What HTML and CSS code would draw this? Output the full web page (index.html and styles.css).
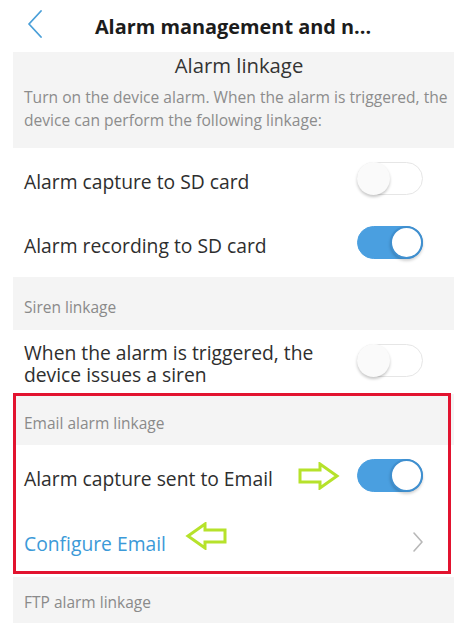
FILE: index.html
```html
<!DOCTYPE html>
<html lang="en">
<head>
<meta charset="utf-8">
<title>Alarm management</title>
<link rel="stylesheet" href="styles.css">
</head>
<body>
<header class="topbar">
  <svg class="back" viewBox="0 0 16 28" width="16" height="28" aria-hidden="true">
    <polyline points="14,1 2,14 14,27" fill="none" stroke="#4a9fd8" stroke-width="1.8" stroke-linecap="round" stroke-linejoin="round"/>
  </svg>
  <h1 class="title">Alarm management and n...</h1>
</header>
<main class="list">
  <section class="intro">
    <h2 class="intro-title">Alarm linkage</h2>
    <p class="intro-text">Turn on the device alarm. When the alarm is triggered, the device can perform the following linkage:</p>
  </section>
  <div class="row">
    <span class="label">Alarm capture to SD card</span>
    <span class="toggle"><span class="knob"></span></span>
  </div>
  <div class="row row-b">
    <span class="label">Alarm recording to SD card</span>
    <span class="toggle on"><span class="knob"></span></span>
  </div>
  <div class="group-head">Siren linkage</div>
  <div class="row row-tall">
    <span class="label">When the alarm is triggered, the device issues a siren</span>
    <span class="toggle"><span class="knob"></span></span>
  </div>
  <div class="highlight">
    <div class="group-head">Email alarm linkage</div>
    <div class="row row-b">
      <span class="label">Alarm capture sent to Email</span>
      <span class="row-end">
        <svg class="arrow" viewBox="0 0 42 28" width="42" height="28" aria-hidden="true">
          <polygon points="2,8 22,8 22,2 39,14 22,26 22,20 2,20" fill="none" stroke="#b6e22b" stroke-width="3" stroke-linejoin="miter"/>
        </svg>
        <span class="toggle on"><span class="knob"></span></span>
      </span>
    </div>
    <div class="row">
      <span class="label link">Configure Email</span>
      <svg class="arrow arrow-left" viewBox="0 0 42 28" width="42" height="28" aria-hidden="true">
        <polygon points="40,8 20,8 20,2 3,14 20,26 20,20 40,20" fill="none" stroke="#b6e22b" stroke-width="3" stroke-linejoin="miter"/>
      </svg>
      <svg class="chev" viewBox="0 0 12 22" width="12" height="22" aria-hidden="true">
        <polyline points="2,2 10,11 2,20" fill="none" stroke="#b8b8b8" stroke-width="1.6" stroke-linecap="round" stroke-linejoin="round"/>
      </svg>
    </div>
  </div>
  <div class="group-head ftp">FTP alarm linkage</div>
</main>
</body>
</html>
```

FILE: styles.css
```css
html, body {
  margin: 0;
  padding: 0;
  background: #ffffff;
}
body {
  font-family: "Open Sans", "Noto Sans", sans-serif;
  color: #2a2a2a;
  width: 466px;
  height: 634px;
  overflow: hidden;
}
.topbar {
  height: 52px;
  display: flex;
  align-items: center;
  justify-content: center;
  position: relative;
}
.back {
  position: absolute;
  left: 27px;
  top: 10px;
}
.title {
  margin: 0;
  font-size: 19.9px;
  font-weight: 700;
  color: #1c1c1c;
}
.list {
  margin: 0 12px 0 13px;
}
.intro {
  background: #f4f4f4;
  height: 96px;
  box-sizing: border-box;
  padding: 0 0 0 11px;
}
.intro-title {
  margin: 0;
  font-size: 20.3px;
  font-weight: 400;
  line-height: 27px;
  text-align: center;
  color: #333;
}
.intro-text {
  margin: 7px 0 0;
  font-size: 15.6px;
  line-height: 23px;
  color: #8c8c8c;
}
.row {
  height: 64px;
  display: flex;
  align-items: center;
  justify-content: space-between;
  padding: 0 31px 0 11px;
  position: relative;
}
.row-b {
  height: 65px;
}
.row-tall .label {
  width: 310px;
  line-height: 22px;
  margin-top: 3px;
}
.label {
  font-size: 19.3px;
  color: #2e2e2e;
  margin-top: 2px;
}
.link {
  color: #3c9ad8;
}
.group-head {
  background: #f4f4f4;
  height: 53px;
  box-sizing: border-box;
  padding: 20px 0 0 11px;
  font-size: 15.5px;
  line-height: 20px;
  color: #8a8a8a;
}
.highlight {
  position: relative;
}
.highlight .group-head {
  height: 51px;
  padding-top: 19px;
}
.highlight::after {
  content: "";
  position: absolute;
  left: 0;
  top: -1px;
  right: 3px;
  bottom: 0;
  border: 3px solid #e2132f;
  pointer-events: none;
}
.ftp {
  margin-top: 3px;
  height: 46px;
  padding-top: 15px;
}
.row-end {
  display: flex;
  align-items: center;
  gap: 17px;
}
.arrow {
  display: block;
  margin-top: -4px;
}
.arrow-left {
  position: absolute;
  left: 172px;
  top: 16px;
}
.chev {
  margin-right: -1px;
}
.toggle {
  width: 66px;
  height: 33px;
  border-radius: 17px;
  box-sizing: border-box;
  border: 1px solid #e6e6e6;
  background: #ffffff;
  position: relative;
  flex: none;
  margin-top: -4px;
}
.knob {
  position: absolute;
  top: -1px;
  left: -1px;
  width: 33px;
  height: 33px;
  border-radius: 50%;
  background: #fafafa;
  box-shadow: 0 2px 3px rgba(0,0,0,0.22);
}
.toggle.on {
  background: #4a9fe0;
  border-color: #4a9fe0;
}
.toggle.on .knob {
  left: auto;
  right: -1px;
  background: #ffffff;
  border: 2px solid #3f8fcf;
  box-sizing: border-box;
  box-shadow: 0 2px 3px rgba(0,0,0,0.18);
}
```
